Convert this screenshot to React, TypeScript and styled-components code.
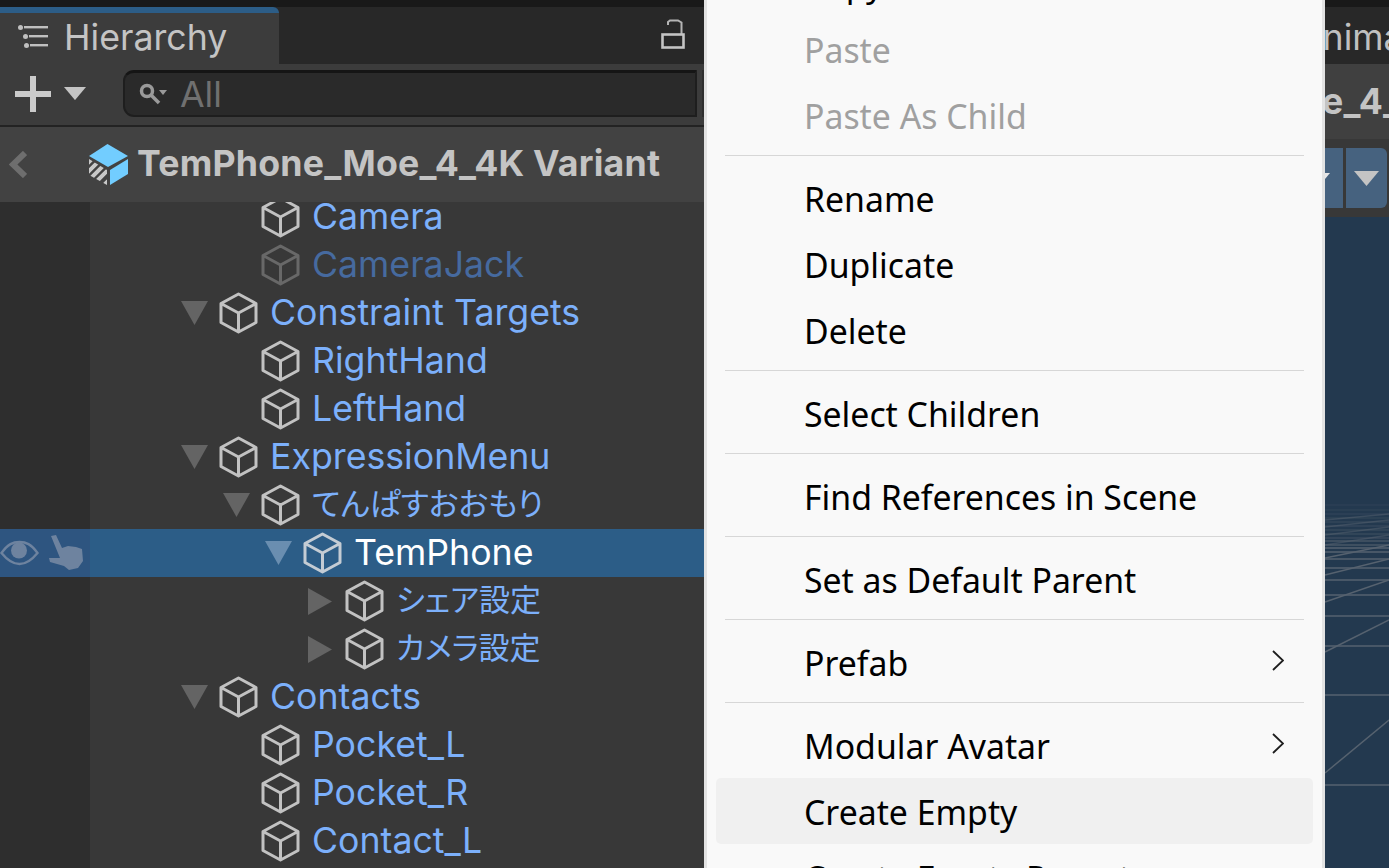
import React from "react";
import styled, { createGlobalStyle } from "styled-components";

const Global = createGlobalStyle`
  html, body {
    margin: 0;
    padding: 0;
    background: #282828;
  }
  * {
    box-sizing: border-box;
  }
`;

const Screen = styled.div`
  position: relative;
  display: flex;
  width: 1389px;
  height: 868px;
  overflow: hidden;
  font-family: Inter, "Noto Sans CJK JP", sans-serif;
  font-size: 35.7px;
  color: #c4c4c4;
`;

const LeftPanel = styled.section`
  display: flex;
  flex-direction: column;
  flex: none;
  width: 704px;
  overflow: hidden;
`;

const RightPanel = styled.section`
  display: flex;
  flex-direction: column;
  flex: 1;
  overflow: hidden;
`;

const TopStrip = styled.div`
  flex: none;
  height: 7px;
  background: #191919;
`;

const TabBar = styled.div`
  display: flex;
  flex: none;
  height: 57px;
  background: #282828;
`;

const Tab = styled.div`
  display: flex;
  align-items: center;
  gap: 16px;
  width: 279px;
  padding: 0 0 4px 17px;
  background: #3c3c3c;
  border-top: 6px solid #2c5d87;
  border-top-right-radius: 6px;
`;

const TabActions = styled.div`
  display: flex;
  flex: 1;
  justify-content: flex-end;
  padding: 12px 19px 0 0;
`;

const HiddenTab = styled.div`
  padding: 8px 0 0 594px;
  white-space: nowrap;
  color: #c0c0c0;
`;

const Toolbar = styled.div`
  display: flex;
  flex: none;
  align-items: center;
  height: 63px;
  padding: 0 0 2px 15px;
  background: #3c3c3c;
  border-bottom: 2px solid #232323;
`;

const AddMenu = styled.div`
  display: flex;
  align-items: center;
  gap: 13px;
  width: 108px;
`;

const Search = styled.div`
  display: flex;
  flex: 1;
  align-items: center;
  gap: 13px;
  height: 47px;
  margin-right: 5px;
  padding-left: 14px;
  background: #2a2a2a;
  border: 2px solid #1e1e1e;
  border-top: 3px solid #151515;
  border-radius: 11px 0 0 11px;
  color: #707070;
`;

const SearchEnd = styled.div`
  flex: none;
  width: 2px;
  height: 47px;
  background: #2f2f2f;
`;

const BreadcrumbBar = styled.div`
  position: relative;
  z-index: 1;
  display: flex;
  flex: none;
  align-items: center;
  height: 75px;
  padding-left: 9px;
  background: #424242;
`;

const Title = styled.span`
  margin: 0 0 3px 9px;
  font-weight: 700;
  letter-spacing: 0.2px;
  white-space: nowrap;
`;

const BackSlot = styled.div`
  display: flex;
  width: 80px;
`;

const Tree = styled.div`
  display: flex;
  flex-direction: column;
  flex: 1;
  margin-top: -9px;
  background: linear-gradient(to right, #2e2e2e 90px, #383838 90px);
`;

const Row = styled.div<{ $selected?: boolean }>`
  display: flex;
  flex: none;
  align-items: center;
  height: 48px;
  background: ${(p) => (p.$selected ? "#2c5d87" : "transparent")};
`;

const Gutter = styled.div<{ $selected?: boolean }>`
  display: flex;
  flex: none;
  align-items: center;
  gap: 10px;
  width: 90px;
  height: 100%;
  background: ${(p) => (p.$selected ? "#2e5580" : "transparent")};
`;

const RowBody = styled.div<{ $depth: number }>`
  display: flex;
  align-items: center;
  padding-left: ${(p) => 49 + p.$depth * 42}px;
`;

const ArrowSlot = styled.div`
  display: flex;
  flex: none;
  align-items: center;
  width: 38px;
`;

const Label = styled.span<{ $tone: "link" | "dim" | "active"; $cjk?: boolean }>`
  margin-left: 12px;
  padding-bottom: ${(p) => (p.$cjk ? "7px" : "2px")};
  white-space: nowrap;
  font-size: ${(p) => (p.$cjk ? "31px" : "35.7px")};
  font-feature-settings: ${(p) => (p.$cjk ? '"palt"' : "normal")};
  color: ${(p) =>
    p.$tone === "active" ? "#ffffff" : p.$tone === "dim" ? "#466a9f" : "#7cb0fb"};
`;

const SceneTitleBar = styled.div`
  display: flex;
  flex: none;
  align-items: center;
  height: 75px;
  padding: 0 0 2px 357px;
  background: #404040;
`;

const SceneTitle = styled.span`
  font-weight: 700;
  letter-spacing: 0.2px;
  white-space: nowrap;
`;

const SceneToolbar = styled.div`
  display: flex;
  flex: none;
  justify-content: flex-end;
  align-items: center;
  gap: 3px;
  height: 78px;
  padding: 0 2px 0 0;
  background: #383838;
`;

const SceneButton = styled.div<{ $last?: boolean }>`
  display: flex;
  flex: none;
  justify-content: ${(p) => (p.$last ? "center" : "flex-start")};
  align-items: center;
  width: 41px;
  height: 60px;
  padding: ${(p) => (p.$last ? "0" : "4px 0 0 3px")};
  background: #46627f;
  border-radius: ${(p) => (p.$last ? "0 6px 6px 0" : "0")};
`;

const SceneView = styled.div`
  flex: 1;
  background: #23394f;
`;

const GridSvg = styled.svg`
  display: block;
  width: 100%;
  height: 100%;
`;

const Menu = styled.div`
  position: absolute;
  top: -50px;
  left: 704px;
  width: 621px;
  padding: 0 9px;
  background: #f9f9f9;
  border: solid #e3e3e3;
  border-width: 0 3px;
  font-family: "Noto Sans", "Open Sans", sans-serif;
  font-size: 33.8px;
`;

const Item = styled.div<{ $disabled?: boolean; $hover?: boolean }>`
  display: flex;
  justify-content: space-between;
  align-items: center;
  height: 66px;
  padding: 1px 29px 0 88px;
  border-radius: 5px;
  white-space: nowrap;
  color: ${(p) => (p.$disabled ? "#a0a0a0" : "#000000")};
  background: ${(p) => (p.$hover ? "#f0f0f0" : "transparent")};
`;

const Separator = styled.div`
  height: 1px;
  margin: 7px 9px 9px;
  background: #d7d7d7;
`;

const TRI = "#646464";

function Triangle({ down, color = TRI }: { down?: boolean; color?: string }) {
  return (
    <svg width="27" height="27" viewBox="0 0 27 27">
      <polygon
        points={down ? "0,1 27,1 13.5,25" : "1,0 25,13.5 1,27"}
        fill={color}
      />
    </svg>
  );
}

function Cube({ color = "#c2c2c2" }: { color?: string }) {
  return (
    <svg width="39" height="42" viewBox="0 0 39 42" style={{ flex: "none" }}>
      <path
        d="M19.5 2 L37 11.5 V30.5 L19.5 40 L2 30.5 V11.5 Z M2.5 11.8 L19.5 21 L36.5 11.8 M19.5 21 V39.5"
        fill="none"
        stroke={color}
        strokeWidth="3"
        strokeLinejoin="round"
      />
    </svg>
  );
}

function ListIcon() {
  return (
    <svg width="31" height="24" viewBox="0 0 31 24" style={{ flex: "none" }}>
      <g fill="#c0c0c0">
        <rect x="1" y="0" width="5" height="5" rx="2.5" />
        <rect x="6" y="9" width="5" height="5" rx="2.5" />
        <rect x="7" y="18" width="5" height="5" rx="2.5" />
        <rect x="7" y="1" width="24" height="2.4" />
        <rect x="12" y="10" width="19" height="2.4" />
        <rect x="13" y="19" width="18" height="2.4" />
      </g>
    </svg>
  );
}

function LockIcon() {
  return (
    <svg width="24" height="30" viewBox="0 0 24 30">
      <path
        d="M7 6 V3 L9 1.5 H17 L20.5 3.5 V15"
        fill="none"
        stroke="#b4b4b4"
        strokeWidth="2"
      />
      <rect x="1.5" y="15.5" width="21" height="13" fill="none" stroke="#c4c4c4" strokeWidth="2.6" />
    </svg>
  );
}

function PlusIcon() {
  return (
    <svg width="36" height="36" viewBox="0 0 36 36" style={{ flex: "none" }}>
      <path d="M15 0 H21 V15 H36 V21 H21 V36 H15 V21 H0 V15 H15 Z" fill="#cbcbcb" />
    </svg>
  );
}

function SmallDown({ width = 22, color = "#c4c4c4" }: { width?: number; color?: string }) {
  return (
    <svg width={width} height={width * 0.6} viewBox="0 0 22 13" style={{ flex: "none" }}>
      <polygon points="0,0 22,0 11,13" fill={color} />
    </svg>
  );
}

function SearchIcon() {
  return (
    <svg width="28" height="26" viewBox="0 0 28 26" style={{ flex: "none" }}>
      <circle cx="8" cy="10" r="5.5" fill="none" stroke="#9a9a9a" strokeWidth="3.5" />
      <path d="M12 14 L20 22" stroke="#9a9a9a" strokeWidth="3.5" />
      <polygon points="20,9 28,9 24,14" fill="#9a9a9a" />
    </svg>
  );
}

function BackIcon() {
  return (
    <svg width="18" height="27" viewBox="0 0 18 27" style={{ flex: "none" }}>
      <path d="M16 2 L4 13.5 L16 25" fill="none" stroke="#6e6e6e" strokeWidth="6" />
    </svg>
  );
}

function PrefabIcon() {
  return (
    <svg width="39" height="42" viewBox="0 0 39 42" style={{ flex: "none" }}>
      <defs>
        <clipPath id="prefab-left">
          <polygon points="0,15 18,26 18,41 0,31" />
        </clipPath>
      </defs>
      <polygon points="18.5,0 39,12 19,23 0,12" fill="#72cdff" />
      <polygon points="21,26 39,15 39,30 21,41" fill="#72cdff" />
      <g clipPath="url(#prefab-left)" stroke="#c8c8c8" strokeWidth="4">
        <path d="M-4 22 L6 12 M-4 31 L14 13 M0 36 L20 16 M7 38 L22 23 M14 42 L24 32" />
      </g>
    </svg>
  );
}

function EyeIcon() {
  return (
    <svg width="39" height="26" viewBox="0 0 39 26" style={{ flex: "none" }}>
      <path
        d="M1.5 13 C8 4 13 2 19.5 2 C26 2 31 4 37.5 13 C31 21 26 24 19.5 24 C13 24 8 21 1.5 13 Z"
        fill="none"
        stroke="#6e839f"
        strokeWidth="2.4"
      />
      <circle cx="19" cy="10.5" r="8" fill="#6e839f" />
    </svg>
  );
}

function HandIcon() {
  return (
    <svg width="35" height="36" viewBox="0 0 35 36" style={{ flex: "none" }}>
      <path
        d="M2 1 L7 0 L13 13 L19 11 L27 12 L33 14 L34 26 L29 33 L20 35 L15 31 L1 27 L0 23 L11 23 Z"
        fill="#6e839f"
      />
    </svg>
  );
}

function Chevron() {
  return (
    <svg width="12" height="21" viewBox="0 0 12 21" style={{ flex: "none", marginTop: -4 }}>
      <path d="M1 1 L11 10.5 L1 20" fill="none" stroke="#1e1e1e" strokeWidth="1.8" />
    </svg>
  );
}

// scene grid sits behind the menu, only the last 64px of the view show
const GRID_LEFT = 621;
const GRID_RIGHT = 685;
const GRID_H = [
  505, 510, 514, 518, 522, 526, 530, 534, 538, 541, 545, 548, 552, 559, 568, 580, 595, 616,
  646, 695, 785,
];
const GRID_D = [
  [773, 720],
  [652, 620],
  [602, 580],
  [575, 559],
  [558, 545],
  [545, 535],
  [535, 527],
  [527, 520],
  [520, 514],
];

function SceneGrid() {
  return (
    <GridSvg viewBox="0 217 685 651" preserveAspectRatio="none">
      <g stroke="#56626f" fill="none">
        {GRID_H.map((y) => (
          <line
            key={y}
            x1={GRID_LEFT}
            x2={GRID_RIGHT}
            y1={y}
            y2={y}
            strokeWidth={y > 540 ? 1.5 : 1}
            strokeOpacity={y > 545 ? 1 : 0.25 + (y - 505) * 0.012}
          />
        ))}
        {GRID_D.map(([a, b]) => (
          <line
            key={a}
            x1={GRID_LEFT}
            x2={GRID_RIGHT}
            y1={a}
            y2={b}
            strokeWidth="1.5"
            strokeOpacity={a > 545 ? 1 : 0.5}
          />
        ))}
      </g>
    </GridSvg>
  );
}

interface Node {
  name: string;
  depth: number;
  open?: boolean;
  closed?: boolean;
  tone?: "link" | "dim" | "active";
  cjk?: boolean;
}

const NODES: Node[] = [
  { name: "Camera", depth: 2 },
  { name: "CameraJack", depth: 2, tone: "dim" },
  { name: "Constraint Targets", depth: 1, open: true },
  { name: "RightHand", depth: 2 },
  { name: "LeftHand", depth: 2 },
  { name: "ExpressionMenu", depth: 1, open: true },
  { name: "てんぱすおおもり", depth: 2, open: true, cjk: true },
  { name: "TemPhone", depth: 3, open: true, tone: "active" },
  { name: "シェア設定", depth: 4, closed: true, cjk: true },
  { name: "カメラ設定", depth: 4, closed: true, cjk: true },
  { name: "Contacts", depth: 1, open: true },
  { name: "Pocket_L", depth: 2 },
  { name: "Pocket_R", depth: 2 },
  { name: "Contact_L", depth: 2 },
];

function TreeRow({ node }: { node: Node }) {
  const selected = node.tone === "active";
  const cubeColor = node.tone === "dim" ? "#686868" : selected ? "#c4ccd4" : "#c2c2c2";
  return (
    <Row $selected={selected}>
      <Gutter $selected={selected}>
        {selected && <EyeIcon />}
        {selected && <HandIcon />}
      </Gutter>
      <RowBody $depth={node.depth}>
        <ArrowSlot>
          {node.open && <Triangle down color={selected ? "#6a8eb0" : TRI} />}
          {node.closed && <Triangle />}
        </ArrowSlot>
        <Cube color={cubeColor} />
        <Label $tone={node.tone ?? "link"} $cjk={node.cjk}>
          {node.name}
        </Label>
      </RowBody>
    </Row>
  );
}

type MenuEntry = { label: string; disabled?: boolean; hover?: boolean; sub?: boolean } | "sep";

const MENU: MenuEntry[] = [
  { label: "Copy" },
  { label: "Paste", disabled: true },
  { label: "Paste As Child", disabled: true },
  "sep",
  { label: "Rename" },
  { label: "Duplicate" },
  { label: "Delete" },
  "sep",
  { label: "Select Children" },
  "sep",
  { label: "Find References in Scene" },
  "sep",
  { label: "Set as Default Parent" },
  "sep",
  { label: "Prefab", sub: true },
  "sep",
  { label: "Modular Avatar", sub: true },
  { label: "Create Empty", hover: true },
  { label: "Create Empty Parent" },
];

export default function App() {
  return (
    <Screen>
      <Global />
      <LeftPanel>
        <TopStrip />
        <TabBar>
          <Tab>
            <ListIcon />
            Hierarchy
          </Tab>
          <TabActions>
            <LockIcon />
          </TabActions>
        </TabBar>
        <Toolbar>
          <AddMenu>
            <PlusIcon />
            <SmallDown />
          </AddMenu>
          <Search>
            <SearchIcon />
            All
          </Search>
          <SearchEnd />
        </Toolbar>
        <BreadcrumbBar>
          <BackSlot>
            <BackIcon />
          </BackSlot>
          <PrefabIcon />
          <Title>TemPhone_Moe_4_4K Variant</Title>
        </BreadcrumbBar>
        <Tree>
          {NODES.map((node) => (
            <TreeRow key={node.name} node={node} />
          ))}
        </Tree>
      </LeftPanel>
      <RightPanel>
        <TopStrip />
        <TabBar>
          <HiddenTab>Animator</HiddenTab>
        </TabBar>
        <SceneTitleBar>
          <SceneTitle>TemPhone_Moe_4_4K Variant</SceneTitle>
        </SceneTitleBar>
        <SceneToolbar>
          <SceneButton>
            <SmallDown width={25} color="#e8e8e8" />
          </SceneButton>
          <SceneButton $last>
            <SmallDown width={25} />
          </SceneButton>
        </SceneToolbar>
        <SceneView>
          <SceneGrid />
        </SceneView>
      </RightPanel>
      <Menu>
        {MENU.map((entry, i) =>
          entry === "sep" ? (
            <Separator key={i} />
          ) : (
            <Item key={i} $disabled={entry.disabled} $hover={entry.hover}>
              {entry.label}
              {entry.sub && <Chevron />}
            </Item>
          ),
        )}
      </Menu>
    </Screen>
  );
}
